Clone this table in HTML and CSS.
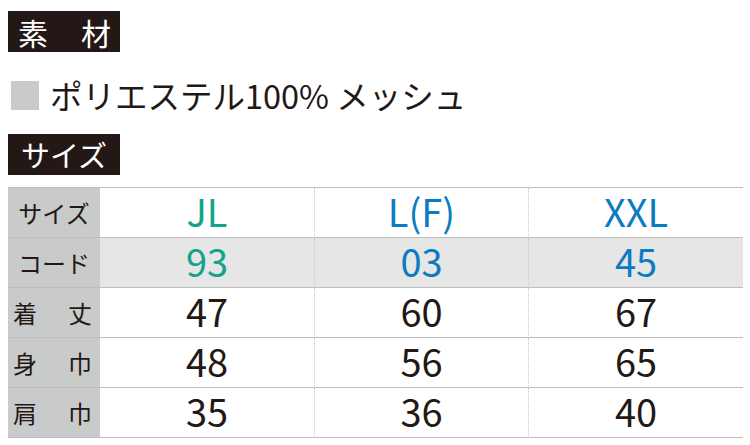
FILE: index.html
```html
<!DOCTYPE html>
<html lang="ja">
<head>
<meta charset="utf-8">
<link rel="stylesheet" href="styles.css">
</head>
<body>
<div class="page">
  <div class="tag tag-spread"><span>素</span><span>材</span></div>
  <div class="material">
    <span class="swatch"></span>
    <span class="material-text">ポリエステル100% メッシュ</span>
  </div>
  <div class="tag tag-size">サイズ</div>
  <div class="table">
    <div class="cell label">サイズ</div>
    <div class="cell val teal">JL</div>
    <div class="cell val blue sep">L(F)</div>
    <div class="cell val blue sep">XXL</div>

    <div class="cell label">コード</div>
    <div class="cell val teal shade">93</div>
    <div class="cell val blue shade sep">03</div>
    <div class="cell val blue shade sep">45</div>

    <div class="cell label spread"><span>着</span><span>丈</span></div>
    <div class="cell val">47</div>
    <div class="cell val sep">60</div>
    <div class="cell val sep">67</div>

    <div class="cell label spread"><span>身</span><span>巾</span></div>
    <div class="cell val">48</div>
    <div class="cell val sep">56</div>
    <div class="cell val sep">65</div>

    <div class="cell label spread"><span>肩</span><span>巾</span></div>
    <div class="cell val">35</div>
    <div class="cell val sep">36</div>
    <div class="cell val sep">40</div>
  </div>
</div>
</body>
</html>
```
FILE: styles.css
```css
* { box-sizing: border-box; }
html, body { margin: 0; padding: 0; background: #fff; }
body {
  font-family: "Noto Sans CJK JP", "Noto Sans", sans-serif;
  color: #231815;
}
.page {
  padding: 11px 0 0 8px;
  display: flex;
  flex-direction: column;
  align-items: flex-start;
}
.tag {
  width: 112px;
  height: 41px;
  background: #231815;
  color: #fff;
  font-size: 30px;
  line-height: 1;
  display: flex;
  align-items: center;
}
.tag-spread {
  justify-content: space-between;
  padding: 0 9px 0 10px;
}
.tag-size {
  justify-content: center;
  font-size: 29px;
  margin-top: 21px;
}
.material {
  margin-top: 25px;
  height: 36px;
  display: flex;
  align-items: center;
  gap: 11px;
}
.swatch {
  width: 28px;
  height: 29px;
  margin-left: 3px;
  background: #c9caca;
}
.material-text {
  font-size: 32.5px;
  line-height: 1;
}
.table {
  margin-top: 12px;
  display: grid;
  grid-template-columns: 92px 214px 214px 215px;
  grid-auto-rows: 50px;
  border-top: 1px solid #bdbdbd;
}
.cell {
  border-bottom: 1px solid #bdbdbd;
  display: flex;
  align-items: center;
  justify-content: center;
  line-height: 1;
}
.label {
  background: #c9caca;
  font-size: 24px;
}
.label.spread {
  justify-content: space-between;
  padding: 0 8px 0 5px;
}
.val {
  font-size: 38px;
  padding-bottom: 4px;
}
.sep {
  border-left: 1px dotted #c8c8c8;
}
.shade { background: #e6e6e6; }
.teal { color: #13a38c; }
.blue { color: #0b7bc2; }
```
